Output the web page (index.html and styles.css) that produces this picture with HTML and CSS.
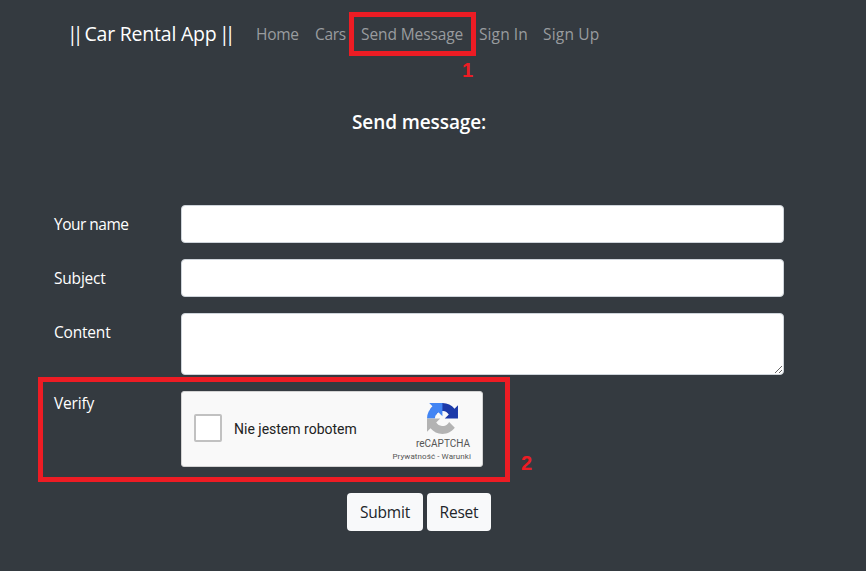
FILE: index.html
```html
<!DOCTYPE html>
<html lang="en">
<head>
<meta charset="utf-8">
<title>Car Rental App</title>
<link rel="stylesheet" href="styles.css">
</head>
<body>
<nav class="navbar">
  <a class="brand"><span class="bars">||</span> Car Rental App <span class="bars">||</span></a>
  <a class="link home">Home</a>
  <a class="link cars">Cars</a>
  <a class="link send">Send Message</a>
  <a class="link sign-in">Sign In</a>
  <a class="link sign-up">Sign Up</a>
</nav>
<main class="content">
  <h1 class="title">Send message:</h1>
  <form class="form">
    <div class="row"><label class="label name" for="name">Your name</label><input class="control" id="name" type="text"></div>
    <div class="row"><label class="label subject" for="subject">Subject</label><input class="control" id="subject" type="text"></div>
    <div class="row"><label class="label body" for="body">Content</label><textarea class="control area" id="body"></textarea></div>
    <div class="row">
      <span class="label verify">Verify</span>
      <div class="captcha">
        <span class="check"></span>
        <span class="robot">Nie jestem robotem</span>
        <div class="badge">
          <svg class="logo" width="31" height="31" viewBox="0 0 64 64" aria-hidden="true">
            <path fill="#1c3aa9" d="M64 31.955l-.033-1.37V4.687l-7.16 7.16C50.948 4.674 42.033.093 32.050.093c-10.400 0-19.622 4.960-25.458 12.640l11.736 11.860a15.550 15.550 0 0 1 4.754-5.334c2.050-1.600 4.952-2.906 8.968-2.906.485 0 .86.057 1.135.163 4.976.393 9.288 3.140 11.828 7.124l-8.307 8.307z"/>
            <path fill="#4285f4" d="M31.862.094l-1.370.033H4.594l7.160 7.160C4.580 13.147 0 22.060 0 32.046l16.260 0c0-.485.057-.86.163-1.135.393-4.976 3.140-9.288 7.124-11.828l8.307 8.307z"/>
            <path fill="#b3b3b3" d="M.001 32.045l.033 1.370v25.898l7.160-7.160c5.860 7.173 14.774 11.754 24.760 11.754 10.400 0 19.622-4.960 25.458-12.640l-11.736-11.860a15.550 15.550 0 0 1-4.754 5.334c-2.050 1.600-4.952 2.906-8.968 2.906-.485 0-.86-.057-1.135-.163-4.976-.393-9.288-3.140-11.828-7.124l8.307-8.307z"/>
          </svg>
          <span class="recaptcha">reCAPTCHA</span>
          <span class="terms">Prywatność - Warunki</span>
        </div>
      </div>
    </div>
    <div class="actions">
      <button class="btn submit" type="button">Submit</button>
      <button class="btn reset" type="button">Reset</button>
    </div>
  </form>
</main>
<div class="mark mark-nav"></div>
<div class="mark mark-verify"></div>
<span class="number one">1</span>
<span class="number two">2</span>
</body>
</html>
```
FILE: styles.css
```css
* { box-sizing: border-box; }
body {
  margin: 0;
  position: relative;
  height: 571px;
  overflow: hidden;
  background: #343a40;
  color: #fff;
  font: 15.500px/24px "Open Sans", "Noto Sans", sans-serif;
}
.navbar {
  display: flex;
  align-items: center;
  height: 68px;
  padding-left: 70px;
  white-space: nowrap;
}
.brand { display: flex; gap: 5.500px; width: 186px; font-size: 19.500px; letter-spacing: -0.220px; }
.bars { width: 9px; margin-left: -3px; margin-right: 3px; letter-spacing: -5px; }
.link { color: #999c9f; letter-spacing: -0.100px; }
.home { width: 59px; letter-spacing: -0.300px; }
.cars { width: 46px; letter-spacing: -0.300px; }
.send { width: 118px; }
.sign-in { width: 64px; letter-spacing: 0.100px; }
.sign-up { letter-spacing: 0.200px; }
.title {
  margin: 0;
  padding: 40px 0 0 352px;
  height: 137px;
  font-size: 19px;
  line-height: 28px;
  font-weight: 600;
  letter-spacing: -0.100px;
  white-space: nowrap;
}
.form { padding-left: 54px; }
.row { display: flex; margin-bottom: 16px; }
.label { width: 127px; padding-top: 7px; letter-spacing: -0.200px; }
.name { letter-spacing: -0.500px; }
.verify { padding-top: 0; }
.control {
  width: 603px;
  height: 38px;
  margin: 0;
  border: 1px solid #ced4da;
  border-radius: 4px;
  background: #fff;
}
.area { height: 62px; resize: vertical; }
.captcha {
  display: flex;
  align-items: center;
  width: 302px;
  height: 76px;
  padding-left: 12px;
  border: 1px solid #d3d3d3;
  border-radius: 3px;
  background: #f9f9f9;
  color: #222;
  font-family: Roboto, sans-serif;
}
.check {
  width: 28px;
  height: 28px;
  margin-bottom: 2px;
  border: 2px solid #c1c1c1;
  border-radius: 2px;
  background: #fff;
}
.robot { margin-left: 12px; width: 157px; font-size: 14px; line-height: 17px; }
.badge {
  display: flex;
  flex-direction: column;
  align-items: flex-end;
  width: 80px;
  height: 74px;
  padding-top: 11px;
  color: #555;
  white-space: nowrap;
}
.logo { margin-right: 13px; }
.recaptcha { margin: 4px 1px 0 0; font-size: 10px; line-height: 12px; }
.terms { margin: 2px 0 0 0; font-size: 8px; line-height: 10px; letter-spacing: 0.080px; }
.actions { display: flex; gap: 4px; padding: 10px 0 0 293px; }
.btn {
  height: 38px;
  padding: 0;
  border: 0;
  border-radius: 4px;
  background: #f8f9fa;
  color: #212529;
  font: inherit;
  letter-spacing: -0.200px;
}
.submit { width: 76px; }
.reset { width: 64px; }
.mark { position: absolute; border: 5px solid #ed1c24; }
.mark-nav { left: 349px; top: 12px; width: 127px; height: 44px; }
.mark-verify { left: 38px; top: 377px; width: 472px; height: 105px; }
.number {
  position: absolute;
  color: #ed1c24;
  font: bold 20px/20px "Liberation Sans", sans-serif;
}
.one { left: 462px; top: 60px; }
.two { left: 521px; top: 453px; }
```
